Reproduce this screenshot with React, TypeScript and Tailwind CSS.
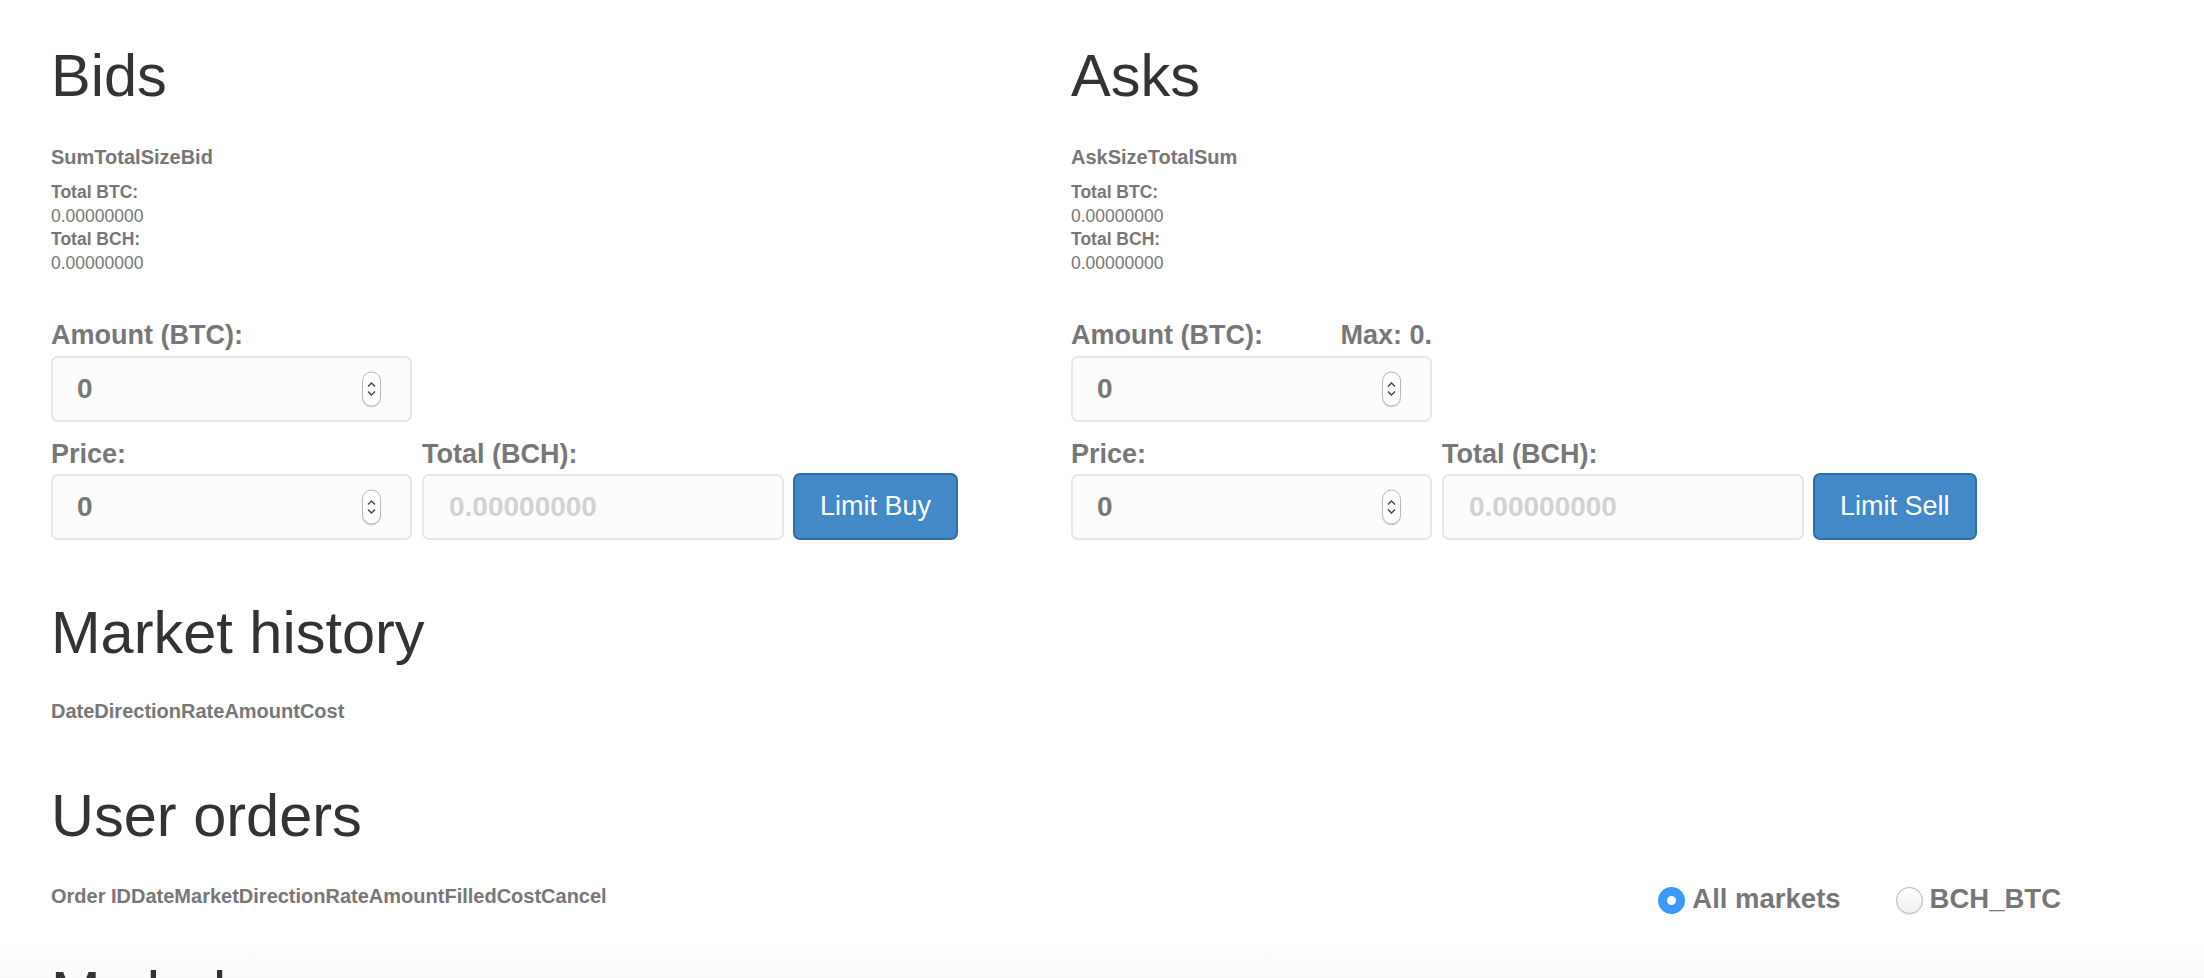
import React from "react";

function Spinner() {
  return (
    <span className="pointer-events-none absolute right-[31px] top-1/2 flex h-[35px] w-[19px] -translate-y-1/2 flex-col items-center justify-center gap-[3px] rounded-full border border-[#b9b9b9] bg-white shadow-[0_1px_1px_rgba(0,0,0,0.15)]">
      <svg width="9" height="6" viewBox="0 0 9 6" fill="none">
        <path d="M1 5L4.5 1.5L8 5" stroke="#444" strokeWidth="1.4" />
      </svg>
      <svg width="9" height="6" viewBox="0 0 9 6" fill="none">
        <path d="M1 1L4.5 4.5L8 1" stroke="#444" strokeWidth="1.4" />
      </svg>
    </span>
  );
}

function NumberInput({ className = "" }: { className?: string }) {
  return (
    <div className={`relative h-[66px] w-[361px] ${className}`}>
      <input
        type="text"
        defaultValue="0"
        className="h-full w-full rounded-[7px] border-2 border-[#e6e6e6] bg-[#fcfcfc] pl-[24px] text-[28px] font-bold text-[#777] outline-none"
      />
      <Spinner />
    </div>
  );
}

function Label({ children }: { children: React.ReactNode }) {
  return (
    <div className="h-[36px] text-[27px] font-bold leading-[36px] text-[#777]">
      {children}
    </div>
  );
}

function OrderSide({
  title,
  header,
  action,
  max,
}: {
  title: string;
  header: string;
  action: string;
  max?: boolean;
}) {
  return (
    <section>
      <h1 className="text-[59.5px] font-normal leading-[64px] text-[#333]">{title}</h1>
      <div className="mt-[36px] text-[20px] font-bold leading-[26px] text-[#777]">
        {header}
      </div>
      <div className="mt-[11px] text-[17.5px] leading-[23.5px] text-[#777]">
        <div className="font-bold">Total BTC:</div>
        <div>0.00000000</div>
        <div className="font-bold">Total BCH:</div>
        <div>0.00000000</div>
      </div>

      <div className="mt-[42px] flex w-[361px] justify-between">
        <Label>Amount (BTC):</Label>
        {max && <Label>Max: 0.</Label>}
      </div>
      <NumberInput className="mt-[3px]" />

      <div className="mt-[14px] flex items-end">
        <div>
          <Label>Price:</Label>
          <NumberInput className="mt-[2px]" />
        </div>
        <div className="ml-[10px]">
          <Label>Total (BCH):</Label>
          <input
            type="text"
            readOnly
            placeholder="0.00000000"
            className="mt-[2px] h-[66px] w-[362px] rounded-[7px] border-2 border-[#e6e6e6] bg-[#fcfcfc] pl-[25px] text-[28px] font-bold text-[#777] outline-none placeholder:text-[#d2d2d2]"
          />
        </div>
        <button className="ml-[9px] h-[67px] rounded-[7px] border-2 border-[#2f6ea6] bg-[#4389c8] px-[25px] text-[27px] text-white">
          {action}
        </button>
      </div>
    </section>
  );
}

function Radio({ checked, label }: { checked?: boolean; label: string }) {
  return (
    <label className="flex h-[34px] items-center gap-[7px] text-[27.5px] font-bold leading-[34px] text-[#777]">
      {checked ? (
        <span className="mt-[3px] flex h-[27px] w-[27px] items-center justify-center rounded-full bg-[#3b99fc]">
          <span className="h-[9px] w-[9px] rounded-full bg-white" />
        </span>
      ) : (
        <span className="mt-[3px] h-[27px] w-[27px] rounded-full border border-[#b3b3b3] bg-gradient-to-b from-white to-[#efefef] shadow-[0_1px_1px_rgba(0,0,0,0.12)]" />
      )}
      <span>{label}</span>
    </label>
  );
}

export default function App() {
  return (
    <div className="min-h-screen overflow-hidden bg-white font-['Liberation_Sans',Arial,sans-serif]">
      <div className="w-[2091px] pl-[51px] pt-[44px]">
        <div className="grid grid-cols-[1020px_1020px]">
          <OrderSide title="Bids" header="SumTotalSizeBid" action="Limit Buy" />
          <OrderSide title="Asks" header="AskSizeTotalSum" action="Limit Sell" max />
        </div>

        <h1 className="mt-[61px] text-[59.5px] font-normal leading-[64px] text-[#333]">
          Market history
        </h1>
        <div className="mt-[33px] text-[20px] font-bold leading-[26px] text-[#777]">
          DateDirectionRateAmountCost
        </div>

        <h1 className="mt-[60px] text-[59.5px] font-normal leading-[64px] text-[#333]">
          User orders
        </h1>
        <div className="mt-[34px] flex items-start">
          <div className="mt-[1px] text-[20px] font-bold leading-[26px] text-[#777]">
            Order IDDateMarketDirectionRateAmountFilledCostCancel
          </div>
          <div className="ml-auto mr-[30px] flex gap-[55px]">
            <Radio checked label="All markets" />
            <Radio label="BCH_BTC" />
          </div>
        </div>
      </div>

      <div className="mt-[30px] bg-gradient-to-b from-[#fdfdfd] to-[#f6f6f6] pl-[51px] pt-[15px]">
        <h1 className="text-[59.5px] font-normal leading-[64px] text-[#333]">My balances</h1>
      </div>
    </div>
  );
}
